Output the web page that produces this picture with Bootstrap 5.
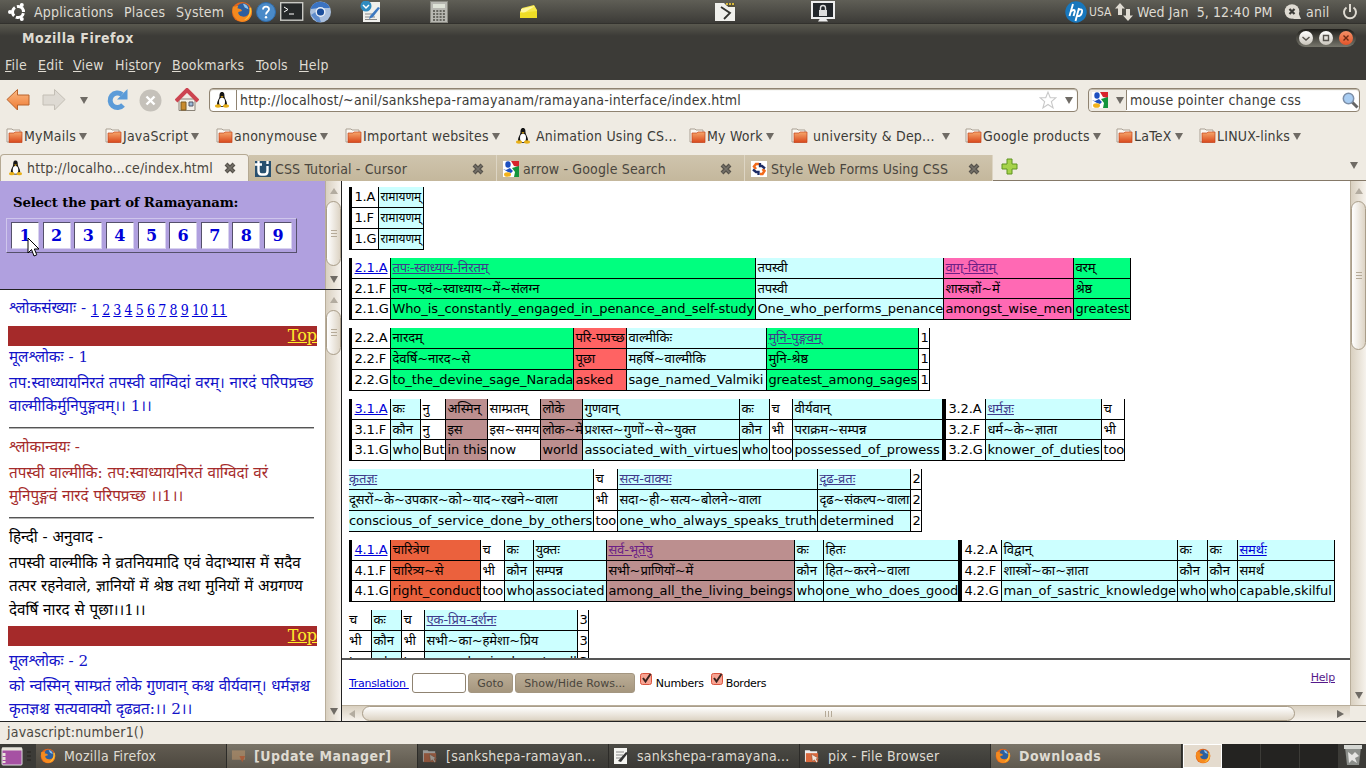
<!DOCTYPE html>
<html lang="en">
<head>
<meta charset="utf-8">
<meta name="viewport" content="width=device-width, initial-scale=1">
<title>Mozilla Firefox</title>
<link href="https://cdn.jsdelivr.net/npm/bootstrap@5.3.0/dist/css/bootstrap.min.css" rel="stylesheet">
<style>
:root{--ui:"DejaVu Sans Condensed","DejaVu Sans",sans-serif;--page:"DejaVu Sans","Noto Sans Devanagari",sans-serif;--serif:"DejaVu Serif","Noto Sans Devanagari",serif}
html,body{height:768px;overflow:hidden}
body{width:1366px;font:14px/20px "DejaVu Sans","Noto Sans",sans-serif;font-stretch:condensed;color:#3c3b37;background:#efebe3;white-space:nowrap}
svg{display:block;flex:none}
a{color:#0000d8}
.ui{font-family:var(--ui);font-stretch:condensed;letter-spacing:.22px}
.ui b{letter-spacing:.5px}
.panel{height:24px;background:linear-gradient(#5f5e56,#3c3b37);border-bottom:1px solid #32312d;color:#dfdbd2}
.panel .slots{display:grid;grid-template-columns:34px 90px 52px 55px 25px 24px 29px 51px 70px 89px 196px 96px 254px 24px 26px 22px 147px 22px 36px 1fr}
.usa{font-size:12px;letter-spacing:0}
.clock{letter-spacing:.1px}
.titlebar{height:30px;background:linear-gradient(#5a594f,#3c3b37 12px);color:#dfdbd2;padding-left:22px}
.wbtns{width:60px;height:18px;border-radius:9px;background:linear-gradient(#1e1d1a,#77766c);margin:5px 10px 0 0}
.wbtn{width:14px;height:14px;border-radius:50%;background:linear-gradient(#fff,#c9c5bb)}
.wbtn.x{background:linear-gradient(#f49067,#e2542a)}
.menus{height:26px;background:#3c3b37;color:#dfdbd2;display:grid;grid-template-columns:33px 35px 42px 57px 84px 43px 1fr;padding-left:5px;line-height:22px}
.navrow{height:40px}
.navrow .slots{display:grid;grid-template-columns:36px 38px 26px 33px 36px 34px;padding-left:6px}
.field{height:24px;background:#fff;border:1px solid #8f8371;border-radius:4px;box-shadow:inset 0 1px 1px #bbb3a4}
.urlbar{width:869px}
.searchbar{width:272px;margin-left:10px}
.engine{width:37px;height:21px;background:#efebe3;border-radius:4px 0 0 4px;padding-left:3px}
.sep{width:1px;height:20px;background:#8f8371;margin:0 3px 0 2px}
.marks{height:34px;display:grid;grid-template-columns:99px 111px 129px 170px 174px 102px 174px 151px 83px 1fr;padding:0 0 2px 6px;align-items:center}
.marks>div,.tabx{display:flex;align-items:center}
.marks svg{margin-right:1px}.marks .tri{margin-left:3px}
.tri{width:0;height:0;border:4px solid transparent;border-top:7px solid #6f6b65;border-bottom:0}
.tabs{height:27px;border-bottom:1px solid #857968}
.tabx{width:248px;height:26px;margin-top:1px;padding:1px 12px 0 6px;background:linear-gradient(#cfc4ad,#c4b79c);border-right:1px solid #ddd5c4;color:#4a463e;letter-spacing:.15px}
.tabx.on{width:249px;padding:0 12px 0 7px;background:#f3efe8;border:1px solid #b5a993;border-bottom:0;border-radius:4px 4px 0 0;height:27px;margin-top:0}
.frames{height:541px;background:#fff;border-bottom:1px solid #222}
.frames>div{letter-spacing:0}
.leftcol{width:342px;border-right:1px solid #222}
.pickrow{height:109px;border-bottom:1px solid #222}
.pick{height:108px;background:#b0a0df;font-family:var(--serif);font-stretch:normal;color:#000}
.pick-t{font-size:13.3px;padding:12px 0 0 13px;letter-spacing:-.18px}
.numbox{width:291px;height:35px;margin:5px 0 0 6px;border:1px solid;border-color:#cfc6ec #55506b #55506b #cfc6ec;padding:3px 4px 0}
.numbox span{width:28px;height:27px;background:#fff;border:1px solid;border-color:#55506b #d9d3f0 #d9d3f0 #55506b;font:bold 16px/25px var(--serif);color:#0000d8;text-align:center}
.shloka{font:15.2px/23.5px var(--serif);font-stretch:normal;color:#000;padding:0 10px 0 9px;width:326px;height:431px;overflow:hidden}
.shloka p{margin:0}
.shloka .s1{height:36px;padding-top:7px}
.shloka .s2{height:26px}
.shloka .s3{height:28px;padding-top:2px}
.shloka .low{height:29px}
.nums{font:14px "DejaVu Serif Condensed","DejaVu Serif",serif;font-stretch:condensed;word-spacing:-.8px;vertical-align:-2px}
.blue{color:#1212c8}.red{color:#a52a2a}
.topbar{background:#a52a2a;height:19.5px;line-height:19px;margin:0 -2px 0 -1px;text-align:right}
.topbar a{color:#ffee2a;font-size:16px}
.rule{height:2px;background:#555;border-bottom:1px solid #b5b5b5;margin:8px 1px 5px 0}
.vbar{width:16px;background:linear-gradient(90deg,#d9d0c0,#f6f2ec);border-left:1px solid #b9ae9b}
.hbar{height:16px;background:linear-gradient(#d9d0c0,#f6f2ec);border-top:1px solid #b9ae9b}
.knob{border:1px solid #a99d89;border-radius:8px;background:linear-gradient(90deg,#fff,#ddd4c5);display:flex;align-items:center;justify-content:center}
.knob::after{content:"";width:6px;height:7px;background:repeating-linear-gradient(#b5aa98 0 1px,transparent 1px 3px)}
.hbar .knob{background:linear-gradient(#fff,#ddd4c5)}
.hbar .knob::after{width:7px;height:6px;background:repeating-linear-gradient(90deg,#b5aa98 0 1px,transparent 1px 3px)}
.arr{height:20px;display:flex;align-items:center;justify-content:center}
.arr::before{content:"";border:4px solid transparent}
.up::before{border-bottom:6px solid #b3aca0;border-top:0}.dn::before{border-top:7px solid #6f6b65;border-bottom:0}
.lf::before{border-right:6px solid #b3aca0;border-left:0}.rt::before{border-left:7px solid #6f6b65;border-right:0}
.hbar .arr{width:20px;height:15px}
.corner{width:16px;background:#efebe3}
.rightpane{height:524px}
.words{font:13px/20px var(--page);font-stretch:normal;letter-spacing:-.06px;color:#000;padding:6.3px 0 0 7px;height:477px;overflow:hidden}
.verse{display:flex;height:62.5px;margin-bottom:8px}
.wcol{flex:none;border-right:1px solid #000}
.wcol div{height:20.83px;border-bottom:1px solid #000;padding-left:1.4px}
.wcol.flush div{padding-left:0}
.wcol.snug div{font-size:12px}
.wcol.edge{border-left:3px solid #000}
.wcol.edge div{padding-left:2.5px;letter-spacing:-.15px}
.verse a{color:#3f3a8c}.verse a.new{color:#0000d8}.verse a.vis{color:#6d1f86}
.c-cy{background:#cff}.c-gr{background:#00ff7f}.c-pk{background:#ff69b4}.c-rd{background:#ff6363}.c-br{background:#bc8f8f}.c-or{background:#eb613d}
.tools{height:47px;font:11px/16px var(--page);font-stretch:normal;color:#000;padding-left:7px;border-top:2px solid #555}
.tools .lbl{margin-top:16px;letter-spacing:-.3px}
.gbox{width:54px;height:20px;border:1px solid #8f8371;border-radius:3px;margin:13px 2px 0 3px}
.gbtn{height:20px;border:1px solid #a39681;border-radius:3px;background:linear-gradient(#bcae97,#a5967e);color:#4a453c;line-height:19px;text-align:center;margin-top:13px}
.goto{width:45px}.rows{width:120px;margin-left:2px}
.ck{margin:12px 3px 0 5px}.ck2{margin:12px 2px 0 7px}
.helplink{margin:10px 15px 0 0;letter-spacing:-.2px}
.tools a.helplink{color:#551a8b}
.status{height:22px;padding-left:7px;color:#4a4741;line-height:21px}
.taskbar{height:24px;background:#3c3b37;color:#dfdbd2}
.task{width:191px;height:24px;border-right:1px solid #2c2b28;background:linear-gradient(#4c4b45,#3a3935);padding-left:4px}
.task.hot{background:linear-gradient(#7a7468,#5f594e)}
.task.lit{background:linear-gradient(#625c52,#4d483f)}
.desks{margin-left:1px}
.desks div{width:39px;height:24px;background:#242321;border-right:1px solid #3c3b37}
.desks .on{background:#e4dbce;border:1px solid #fff;padding:3px 11px}
.pointer{position:absolute;left:27px;top:237px}
</style>
</head>
<body class="ui">
<svg width="0" height="0" class="position-absolute">
<defs>
<linearGradient id="go" x2="0" y2="1"><stop stop-color="#f6a76c"/><stop offset="1" stop-color="#d9481c"/></linearGradient>
<linearGradient id="arw" x2="0" y2="1"><stop stop-color="#fbb984"/><stop offset="1" stop-color="#ee7a33"/></linearGradient>
<symbol id="fold" viewBox="0 0 17 16"><path d="M1 1h5l1 1h7v12H1z" fill="#fbf8f3" stroke="#a99f92"/><path d="M3 5h5l1-1h7v10.500H3z" fill="url(#go)" stroke="#c4441b" stroke-width=".7"/></symbol>
<symbol id="tux" viewBox="0 0 16 16"><path d="M8 0C5.500 0 5.600 2.500 5.500 4.500 5.300 7 3 9 3 12c0 2 2 3 5 3s5-1 5-3c0-3-2.300-5-2.500-7.500C10.400 2.500 10.500 0 8 0z" fill="#151515"/><ellipse cx="8" cy="10" rx="3" ry="4.200" fill="#fff"/><path d="M6.500 4.200h3L8 6z" fill="#e8b018"/><ellipse cx="4" cy="14" rx="3" ry="1.700" fill="#e8b018"/><ellipse cx="12" cy="14" rx="3" ry="1.700" fill="#e8b018"/></symbol>
<symbol id="ff" viewBox="0 0 24 24"><circle cx="12" cy="12" r="11" fill="#e4661a"/><circle cx="13" cy="10" r="7.500" fill="#2d5f9e"/><path d="M13 3a7 7 0 0 1 6 6l-4-2z" fill="#8fc4ee"/><path d="M2 6C0 14 5 22 12 22.500 19 23 24 17 22.500 9 21 15 17 18 12.500 17 9 16.500 7.500 14 8 12l4-1-1-2-4-1 1-3-3 1z" fill="#f58a1f"/><path d="M22 7c1 6-2 13-8 14 5-3 7-8 6-13z" fill="#fbc53a"/></symbol>
<symbol id="goog" viewBox="0 0 16 16"><path d="M0 0h16v16H0z" fill="#fff"/><path d="M8 0h8v6l-5-1z" fill="#d8232a"/><path d="M9 7l7-2v11h-5l1-5z" fill="#12943b"/><ellipse cx="5" cy="3.500" rx="2.700" ry="3.300" fill="#1c4fc0"/><path d="M0 8l3 1 4-2 3 3-2 2-3-1z" fill="#1c4fc0"/><ellipse cx="4.500" cy="13.500" rx="3.500" ry="2.300" fill="#f2b21b"/></symbol>
<symbol id="cross" viewBox="0 0 12 12"><path d="M2 2l8 8M10 2l-8 8" stroke="#55514a" stroke-width="4"/><path d="M2.500 2.500l7 7M9.500 2.500l-7 7" stroke="#77736b" stroke-width="1.600"/></symbol>
<symbol id="fbrowse" viewBox="0 0 17 16"><path d="M1 2h5l1 1h7v11H1z" fill="#eee"/><path d="M2 5h13v9.500H2z" fill="#d9683c"/><path d="M8 6l1 8 2-2 2 3 1.500-1-1.500-3 2.500-.5z" fill="#f3e6dc" stroke="#8a4a2c" stroke-width=".6"/></symbol>
<symbol id="tick" viewBox="0 0 13 14"><rect x=".5" y="1.500" width="11" height="11" rx="2" fill="#f8a392" stroke="#d9543e"/><path d="M3 6l2.500 3.500L10.500 2" fill="none" stroke="#3a2420" stroke-width="2"/></symbol>
</defs>
</svg>

<header class="panel"><div class="slots align-items-center h-100">
<svg width="20" height="20" viewBox="0 0 20 20" class="ms-2"><circle cx="10" cy="10" r="5.500" fill="none" stroke="#fff" stroke-width="3" stroke-dasharray="9.500 2" transform="rotate(12 10 10)"/><circle cx="2" cy="10" r="2" fill="#fff"/><circle cx="13.800" cy="3" r="2" fill="#fff"/><circle cx="13.800" cy="17" r="2" fill="#fff"/></svg>
<span>Applications</span><span>Places</span><span>System</span>
<svg width="22" height="22"><use href="#ff"/></svg>
<svg width="20" height="20" viewBox="0 0 20 20"><circle cx="10" cy="10" r="9.500" fill="#4a8ac8" stroke="#2f6cab"/><path d="M7 7.500C7.200 3.500 13 4 13 7.200 13 9.500 10 9.500 10 12.500" fill="none" stroke="#fff" stroke-width="1.800"/><circle cx="10" cy="15.300" r="1.200" fill="#fff"/></svg>
<svg width="24" height="19" viewBox="0 0 24 19"><rect x=".7" y=".7" width="22" height="17.500" fill="#26292a" stroke="#c9c9c4" stroke-width="1.400"/><path d="M4 5l4 2.500-4 2.500M9 12h5" fill="none" stroke="#fff"/></svg>
<svg width="23" height="22" viewBox="0 0 23 22"><circle cx="11.500" cy="11" r="10.500" fill="#a9bfdd"/><path d="M1.500 8A10.500 10.500 0 0 1 21 7L11 7z" fill="#3b73c2"/><path d="M2 14l6-4 4 11-4 0z" fill="#5f8ccc"/><circle cx="11.500" cy="11" r="5" fill="#e9eff7"/><circle cx="11.500" cy="11" r="3.600" fill="#1c4f9c"/></svg>
<svg width="22" height="22" viewBox="0 0 22 22"><path d="M3 1h17v20H3z" fill="#f0f0ec"/><path d="M5 13h8M5 16h10M5 18.500h12" stroke="#888"/><path d="M10 15l8-9 2 1-7 9-4 2z" fill="#3c78c0"/><circle cx="6" cy="5" r="5.500" fill="#2f8bc0"/><path d="M3 4l3 3 3-3" stroke="#fff" stroke-width="1.500" fill="none"/></svg>
<svg width="18" height="22" viewBox="0 0 18 22"><rect x=".5" y=".5" width="17" height="21" fill="#b8b8b2" stroke="#8a8a82"/><path d="M3 3h12v4H3z" fill="#dfe3d8"/><path d="M3 10h12M3 13h12M3 16h12M3 19h12" stroke="#66665f" stroke-width="2" stroke-dasharray="2 1.300"/></svg>
<svg width="20" height="16" viewBox="0 0 20 16"><path d="M1 8L3 4l12-3 3 5v8H1z" fill="#f6e84a"/><path d="M2 5l14-3-11 7-3-1z" fill="#fff6a0"/><path d="M1 9l17-2v7H1z" fill="#efdd26"/></svg>
<svg width="20" height="19" viewBox="0 0 20 19"><path d="M0 1h9l3 3h8v15H0z" fill="#f0f0ec"/><path d="M11 1h9v4h-7z" fill="#55503a"/><path d="M11 2h9" stroke="#d8b93c" stroke-width="2" stroke-dasharray="2 1"/><path d="M6 5l9 6-6 6" fill="none" stroke="#33332f" stroke-width="1.800"/></svg>
<svg width="24" height="22" viewBox="0 0 24 22"><rect x="1" y="1" width="22" height="16" fill="#22262a" stroke="#eee" stroke-width="2"/><path d="M7 20.500h10l-2-3h-6z" fill="#eee"/><path d="M8 9h8v6H8z" fill="#ddd"/><path d="M9.500 9V7a2.500 2.500 0 0 1 5 0v2" stroke="#ddd" fill="none" stroke-width="1.400"/></svg>
<svg width="22" height="22" viewBox="0 0 22 22"><circle cx="11" cy="11" r="10.700" fill="#1877bd"/><path d="M8 3L4.500 15M5.800 10.500q4-3 4 0L8.500 15M14 7l-3.500 13M13 9q5-2 4 2-1 5-5.500 4" fill="none" stroke="#fff" stroke-width="1.900"/></svg>
<span class="usa">USA</span>
<svg width="18" height="18" viewBox="0 0 18 18"><path d="M5 0l5 5.500H7V12H3V5.500H0zM13 18l5-5.500h-3V6h-4v6.500H8z" fill="#dfdbd2"/></svg>
<span class="clock">Wed Jan&nbsp; 5, 12:40 PM</span>
<svg width="17" height="16" viewBox="0 0 17 16"><circle cx="8" cy="7.500" r="7.300" fill="#dfdbd2"/><path d="M9 15l8 0-3-7z" fill="#dfdbd2"/><path d="M5.500 5l5 5M10.500 5l-5 5" stroke="#3c3b37" stroke-width="2.200"/></svg>
<span>anil</span>
<svg width="16" height="16" viewBox="0 0 16 16"><path d="M4.500 3.500a6 6 0 1 0 7 0M8 0v8" fill="none" stroke="#dfdbd2" stroke-width="2"/></svg>
</div></header>

<div class="titlebar d-flex justify-content-between"><b class="lh-lg">Mozilla Firefox</b>
<div class="wbtns d-flex align-items-center justify-content-around">
<span class="wbtn"><svg width="14" height="14"><path d="M3.500 6l3.500 3 3.500-3" fill="none" stroke="#55524c" stroke-width="1.400"/></svg></span>
<span class="wbtn"><svg width="14" height="14"><path d="M4.500 4.500h5v5h-5z" fill="none" stroke="#55524c" stroke-width="1.400"/></svg></span>
<span class="wbtn x"><svg width="14" height="14"><path d="M4.500 4.500l5 5M9.500 4.500l-5 5" stroke="#6b2a14" stroke-width="1.400"/></svg></span>
</div></div>
<nav class="menus"><span><u>F</u>ile</span><span><u>E</u>dit</span><span><u>V</u>iew</span><span>Hi<u>s</u>tory</span><span><u>B</u>ookmarks</span><span><u>T</u>ools</span><span><u>H</u>elp</span></nav>

<div class="navrow d-flex align-items-center">
<div class="slots align-items-center">
<svg width="24" height="24" viewBox="0 0 24 24"><path d="M1 11.500L11.500 1.500V7H23v10H11.500v5z" fill="url(#arw)" stroke="#b8622c"/></svg>
<svg width="24" height="24" viewBox="0 0 24 24"><path d="M23 11.500L12.500 1.500V7H1v10h11.500v5z" fill="#dedad3" stroke="#c3beb5"/></svg>
<span class="tri"></span>
<svg width="23" height="24" viewBox="0 0 23 24"><path d="M17 17A7.300 7.300 0 1 1 16 6.500" fill="none" stroke="#5b9bd8" stroke-width="5"/><path d="M21.500 1v10.500H11z" fill="#5b9bd8"/></svg>
<svg width="23" height="23" viewBox="0 0 23 23"><circle cx="11.500" cy="11.500" r="11" fill="#c5c1ba"/><path d="M7.500 7.500l8 8M15.500 7.500l-8 8" stroke="#fff" stroke-width="2.400"/></svg>
<svg width="24" height="24" viewBox="0 0 24 24"><path d="M4 11h16v11.500H4z" fill="#f3efe8" stroke="#8a8378"/><path d="M1 13L12 2l11 11" fill="none" stroke="#cc4450" stroke-width="4"/><path d="M6 14h5v8H6z" fill="#c98a2d" stroke="#7f5a20"/><path d="M14 14h4v4h-4z" fill="#9dbbd8" stroke="#556"/></svg>
</div>
<div class="field d-flex align-items-center urlbar"><svg width="16" height="16" class="mx-1"><use href="#tux"/></svg><span class="sep"></span><span>http://localhost/~anil/sankshepa-ramayanam/ramayana-interface/index.html</span>
<svg width="18" height="18" viewBox="0 0 16 16" class="ms-auto me-2"><path d="M8 1l2 5h5l-4 3.500 1.500 5.500L8 12l-4.500 3L5 9.500 1 6h5z" fill="#fff" stroke="#c9c9c9"/></svg><span class="tri me-1"></span></div>
<div class="field d-flex align-items-center searchbar"><div class="engine d-flex align-items-center"><svg width="16" height="16" class="me-1"><use href="#goog"/></svg><span class="tri ms-1"></span></div><span class="sep ms-0"></span><span>mouse pointer change css</span>
<svg width="17" height="17" viewBox="0 0 17 17" class="ms-auto"><path d="M10 10l5.500 5.500" stroke="#666" stroke-width="3"/><circle cx="6.500" cy="6.500" r="5.200" fill="#a9cdf2" stroke="#7d8fa8" stroke-width="1.500"/></svg></div>
</div>
<div class="marks">
<div><svg width="17" height="16"><use href="#fold"/></svg>MyMails<i class="tri"></i></div>
<div><svg width="17" height="16"><use href="#fold"/></svg>JavaScript<i class="tri"></i></div>
<div><svg width="17" height="16"><use href="#fold"/></svg>anonymouse<i class="tri"></i></div>
<div><svg width="17" height="16"><use href="#fold"/></svg>Important websites<i class="tri"></i></div>
<div><svg width="16" height="16"><use href="#tux"/></svg><span class="ms-1">Animation Using CS...</span></div>
<div><svg width="17" height="16"><use href="#fold"/></svg>My Work<i class="tri"></i></div>
<div><svg width="17" height="16"><use href="#fold"/></svg><span class="ms-1 me-1">university &amp; Dep...</span><i class="tri"></i></div>
<div><svg width="17" height="16"><use href="#fold"/></svg>Google products<i class="tri"></i></div>
<div><svg width="17" height="16"><use href="#fold"/></svg>LaTeX<i class="tri"></i></div>
<div><svg width="17" height="16"><use href="#fold"/></svg>LINUX-links<i class="tri"></i></div>
</div>
<div class="tabs d-flex">
<div class="tabx on"><svg width="15" height="16" class="me-1"><use href="#tux"/></svg>http://localho...ce/index.html<svg width="12" height="12" class="ms-auto"><use href="#cross"/></svg></div>
<div class="tabx"><svg width="16" height="16" viewBox="0 0 16 16" class="me-1"><path d="M0 0h16v16H0z" fill="#28506f"/><path d="M0 3.500h7M3.500 0v10q0 3.500 3 3.500h3q3 0 3-3.500V5M12.500 0v3" stroke="#fff" stroke-width="2.400" fill="none"/></svg>CSS Tutorial - Cursor<svg width="12" height="12" class="ms-auto"><use href="#cross"/></svg></div>
<div class="tabx"><svg width="16" height="16" class="me-1"><use href="#goog"/></svg>arrow - Google Search<svg width="12" height="12" class="ms-auto"><use href="#cross"/></svg></div>
<div class="tabx"><svg width="16" height="16" viewBox="0 0 16 16" class="me-1"><path d="M0 0h16v16H0z" fill="#fff"/><path d="M8 3H5L3 5.500 5 8M9 13h2.500l2-3-2-2" fill="none" stroke="#f26a1b" stroke-width="2.500"/><path d="M2 8.500l3 2.500h2.500v3M14 7.500L11 5H9V2" fill="none" stroke="#1c2c66" stroke-width="2.300"/></svg>Style Web Forms Using CSS<svg width="12" height="12" class="ms-auto"><use href="#cross"/></svg></div>
<svg width="17" height="17" viewBox="0 0 17 17" class="mt-1 ms-2"><path d="M6 1h5v5h5v5h-5v5H6v-5H1V6h5z" fill="#a6d34a" stroke="#5f9420"/></svg>
<i class="tri ms-auto mt-2 me-2"></i>
</div>

<main class="frames d-flex">
<div class="leftcol">
 <div class="pickrow d-flex">
  <div class="pick flex-fill"><div class="fw-bold pick-t">Select the part of Ramayanam:</div>
   <div class="numbox d-flex justify-content-between"><span>1</span><span>2</span><span>3</span><span>4</span><span>5</span><span>6</span><span>7</span><span>8</span><span>9</span></div></div>
  <div class="vbar d-flex flex-column"><div class="arr up"></div><div class="knob" style="height:65px"></div><div class="arr dn mt-auto"></div></div>
 </div>
 <div class="d-flex">
  <div class="shloka">
   <p class="blue s1">श्लोकसंख्याः - <span class="nums"><a href="#">1</a> <a href="#">2</a> <a href="#">3</a> <a href="#">4</a> <a href="#">5</a> <a href="#">6</a> <a href="#">7</a> <a href="#">8</a> <a href="#">9</a> <a href="#">10</a> <a href="#">11</a></span></p>
   <div class="topbar"><a href="#">Top</a></div>
   <p class="blue s2">मूलश्लोकः - 1</p>
   <p class="blue">तप:स्वाध्यायनिरतं तपस्वी वाग्विदां वरम्। नारदं परिपप्रच्छ<br>वाल्मीकिर्मुनिपुङ्गवम्।। 1।।</p>
   <div class="rule"></div>
   <p class="red s3">श्लोकान्वयः -</p>
   <p class="red">तपस्वी वाल्मीकि: तप:स्वाध्यायनिरतं वाग्विदां वरं<br>मुनिपुङ्गवं नारदं परिपप्रच्छ ।।1।।</p>
   <div class="rule"></div>
   <p class="s3">हिन्दी - अनुवाद -</p>
   <p>तपस्वी वाल्मीकि ने व्रतनियमादि एवं वेदाभ्यास में सदैव<br>तत्पर रहनेवाले, ज्ञानियों में श्रेष्ठ तथा मुनियों में अग्रगण्य<br>देवर्षि नारद से पूछा।।1।।</p>
   <div class="topbar mt-1"><a href="#">Top</a></div>
   <p class="blue low pt-1">मूलश्लोकः - 2</p>
   <p class="blue">को न्वस्मिन् साम्प्रतं लोके गुणवान् कश्च वीर्यवान्। धर्मज्ञश्च<br>कृतज्ञश्च सत्यवाक्यो दृढव्रत:।। 2।।</p>
  </div>
  <div class="vbar d-flex flex-column"><div class="arr up"></div><div class="knob" style="height:45px"></div><div class="arr dn mt-auto"></div></div>
 </div>
</div>
<div class="flex-fill d-flex flex-column">
 <div class="rightpane d-flex">
  <div class="flex-fill">
   <div class="words" id="words"></div>
   <div class="tools d-flex align-items-start"><a href="#" class="lbl">Translation&nbsp;</a><span class="gbox"></span><span class="gbtn goto">Goto</span><span class="gbtn rows">Show/Hide Rows...</span><svg width="13" height="14" class="ck"><use href="#tick"/></svg><span class="lbl">Numbers</span><svg width="13" height="14" class="ck ck2"><use href="#tick"/></svg><span class="lbl">Borders</span><a href="#" class="ms-auto helplink">Help</a></div>
  </div>
  <div class="vbar d-flex flex-column"><div class="arr up"></div><div class="knob" style="height:149px"></div><div class="arr dn mt-auto"></div></div>
 </div>
 <div class="hbar d-flex"><div class="arr lf"></div><div class="knob" style="width:933px"></div><div class="arr rt ms-auto"></div><div class="corner"></div></div>
</div>
</main>
<div class="status">javascript:number1()</div>
<footer class="taskbar d-flex">
<svg width="36" height="24" viewBox="0 0 36 24"><rect x="2" y="4" width="20" height="17" rx="1" fill="#a651a3" stroke="#ddd"/><path d="M2 5h20" stroke="#e8e4da" stroke-width="3"/><path d="M4 9v10" stroke="#e8e4da" stroke-width="3" stroke-dasharray="3 1"/><path d="M27 8h4M27 12h4M27 16h4" stroke="#24231f"/></svg>
<div class="task lit d-flex align-items-center"><svg width="16" height="16" class="me-2"><use href="#ff"/></svg>Mozilla Firefox</div>
<div class="task hot d-flex align-items-center"><svg width="15" height="16" class="me-2 opacity-50" viewBox="0 0 16 16"><path d="M1 2h14v10H1z" fill="#c79a6c"/><path d="M9 8h6l-3 7z" fill="#e4571f"/></svg><b>[Update Manager]</b></div>
<div class="task d-flex align-items-center"><svg width="16" height="16" class="me-2 opacity-50"><use href="#fbrowse"/></svg>[sankshepa-ramayan...</div>
<div class="task d-flex align-items-center"><svg width="16" height="16" class="me-2" viewBox="0 0 16 16"><path d="M1 0h13v16H1z" fill="#f4f4f0"/><path d="M3 4h8M3 7h7M3 10h5" stroke="#888"/><path d="M5 13l8-9 2 1-7 9z" fill="#333"/></svg>sankshepa-ramayana...</div>
<div class="task d-flex align-items-center"><svg width="16" height="16" class="me-2"><use href="#fbrowse"/></svg>pix - File Browser</div>
<div class="task hot d-flex align-items-center"><svg width="16" height="16" class="me-2"><use href="#ff"/></svg><b>Downloads</b></div>
<div class="d-flex desks"><div class="on"><svg width="16" height="16"><use href="#ff"/></svg></div><div></div><div></div><div></div></div>
<svg width="22" height="23" viewBox="0 0 22 23" class="ms-1"><path d="M2 3h16l-2 18H4z" fill="#8b8e8a"/><path d="M1 1h18v4H1z" fill="#d4d6d2"/><path d="M5 8l4 3 3-3 4 4-4 2 2 5-5-3-3 3z" fill="#e5e5e3"/></svg>
</footer>
<svg class="pointer" width="13" height="21" viewBox="0 0 13 21"><path d="M1 1v15l3.500-3.500L7 19l2.800-1.200L7.300 12H12z" fill="#fff" stroke="#000"/></svg>
<script>
// A column is [right edge, tint, devanagari, hindi, gloss, link class]
const L=(n,r,k)=>[r,"edge",n+".A",n+".F",n+".G",k];
const verses=[
[L("1",378),[423,"c-cy snug","रामायणम्","रामायणम्","रामायणम्"]],
[L("2.1",390,"new"),[755,"c-gr","तपः-स्वाध्याय-निरतम्","तप~एवं~स्वाध्याय~में~संलग्न","Who_is_constantly_engaged_in_penance_and_self-study","old"],[943,"c-cy","तपस्वी","तपस्वी","One_who_performs_penance"],[1073,"c-pk","वाग्-विदाम्","शास्त्रज्ञों~में","amongst_wise_men","vis"],[1130,"c-gr","वरम्","श्रेष्ठ","greatest"]],
[L("2.2",390),[573,"c-gr","नारदम्","देवर्षि~नारद~से","to_the_devine_sage_Narada"],[626,"c-rd","परि-पप्रच्छ","पूछा","asked"],[766,"c-cy","वाल्मीकिः","महर्षि~वाल्मीकि","sage_named_Valmiki"],[918,"c-gr","मुनि-पुङ्गवम्","मुनि-श्रेष्ठ","greatest_among_sages","old"],[929,"","1","1","1"]],
[L("3.1",390,"new"),[420,"c-cy","कः","कौन","who"],[445,"","नु","नु","But"],[487,"c-br","अस्मिन्","इस","in this"],[540,"","साम्प्रतम्","इस~समय","now"],[582,"c-br","लोके","लोक~में","world"],[739,"c-cy","गुणवान्","प्रशस्त~गुणों~से~युक्त","associated_with_virtues"],[769,"c-cy","कः","कौन","who"],[792,"","च","भी","too"],[942,"c-cy","वीर्यवान्","पराक्रम~सम्पन्न","possessed_of_prowess"],L("3.2",985),[1101,"c-cy","धर्मज्ञः","धर्म~के~ज्ञाता","knower_of_duties","old"],[1124,"","च","भी","too"]],
[[593,"c-cy flush","कृतज्ञः","दूसरों~के~उपकार~को~याद~रखने~वाला","conscious_of_service_done_by_others","old"],[617,"","च","भी","too"],[817,"c-cy","सत्य-वाक्यः","सदा~ही~सत्य~बोलने~वाला","one_who_always_speaks_truth","old"],[910,"c-cy","दृढ-व्रतः","दृढ~संकल्प~वाला","determined","old"],[921,"","2","2","2"]],
[L("4.1",390,"new"),[480,"c-or","चारित्रेण","चारित्र्य~से","right_conduct"],[504,"","च","भी","too"],[533,"c-cy","कः","कौन","who"],[606,"c-cy","युक्तः","सम्पन्न","associated"],[794,"c-br","सर्व-भूतेषु","सभी~प्राणियों~में","among_all_the_living_beings","vis"],[823,"c-cy","कः","कौन","who"],[958,"c-cy","हितः","हित~करने~वाला","one_who_does_good"],L("4.2",1001),[1177,"c-cy","विद्वान्","शास्त्रों~का~ज्ञाता","man_of_sastric_knowledge"],[1207,"c-cy","कः","कौन","who"],[1237,"c-cy","कः","कौन","who"],[1334,"c-cy","समर्थः","समर्थ","capable,skilful","new"]],
[[371,"flush","च","भी","too"],[401,"c-cy","कः","कौन","who"],[424,"","च","भी","too"],[577,"c-cy","एक-प्रिय-दर्शनः","सभी~का~हमेशा~प्रिय","one_who_is_dear_to_all","old"],[588,"","3","3","3"]]
];
document.getElementById("words").innerHTML=verses.map(cols=>{
  let left=348;
  return '<div class="verse">'+cols.map(([r,tint,a,f,g,link])=>{
    const w=r-left; left=r;
    return `<div class="wcol ${tint}" style="width:${w}px"><div>${link?`<a href="#" class="${link}">${a}</a>`:a}</div><div>${f}</div><div>${g}</div></div>`;
  }).join("")+"</div>";
}).join("");
</script>
<script src="https://cdn.jsdelivr.net/npm/bootstrap@5.3.0/dist/js/bootstrap.bundle.min.js"></script>
</body>
</html>
